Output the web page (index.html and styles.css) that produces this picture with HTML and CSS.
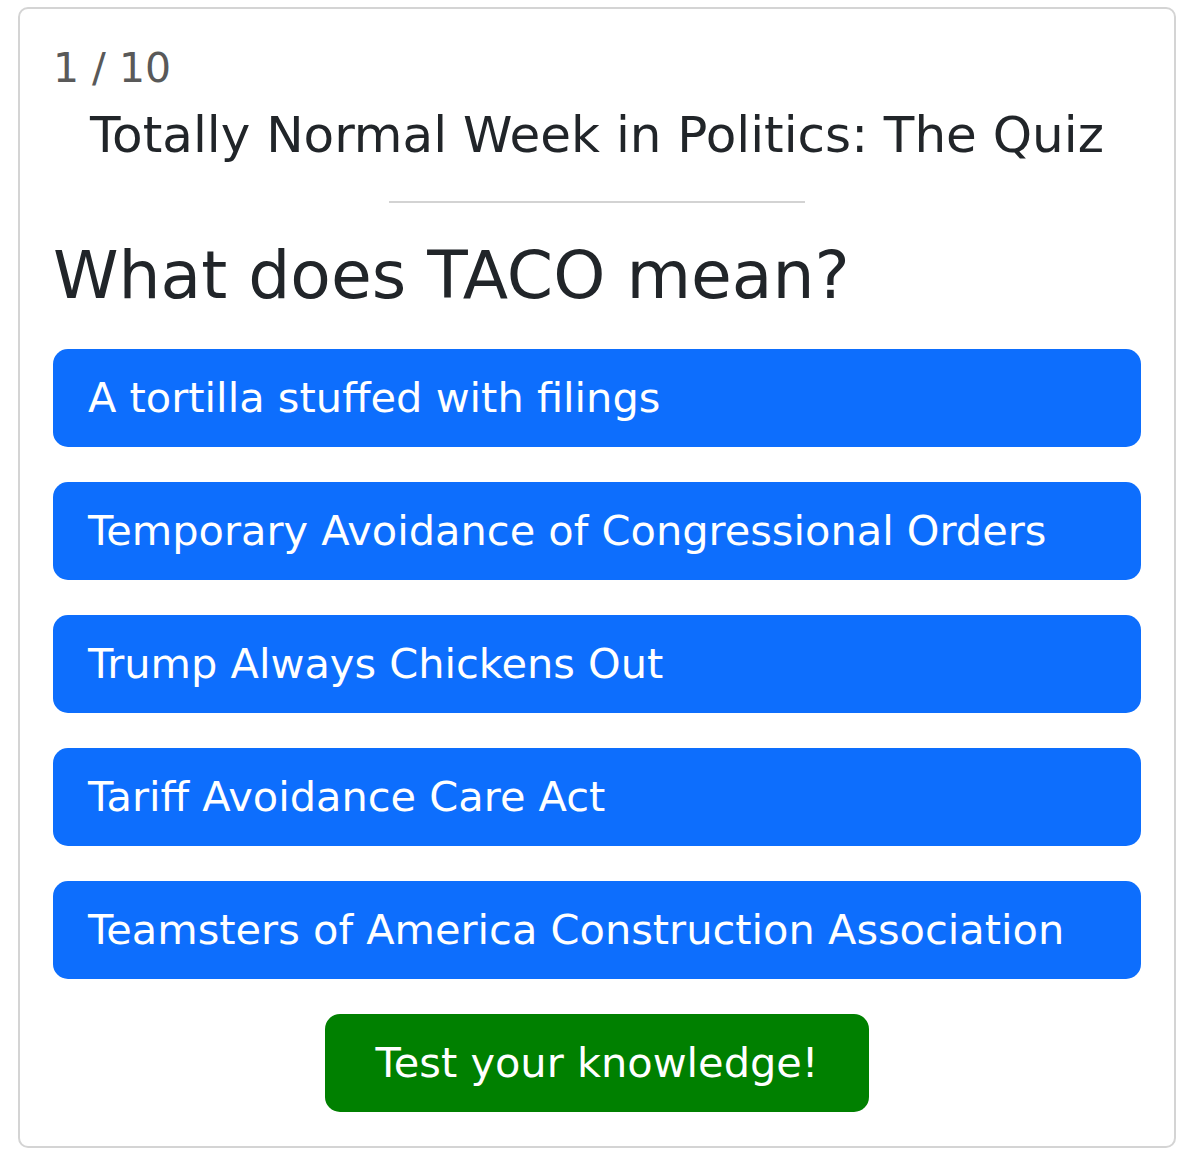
FILE: index.html
```html
<!DOCTYPE html>
<html lang="en">
<head>
  <meta charset="UTF-8">
  <meta name="viewport" content="width=device-width, initial-scale=1.0">
  <title>Totally Normal Week in Politics: The Quiz</title>
  <link rel="stylesheet" href="styles.css">
</head>
<body>
  <div class="quiz-card">
    <div class="progress">1 / 10</div>
    <h2 class="quiz-title">Totally Normal Week in Politics: The Quiz</h2>
    <hr class="divider">
    <h1 class="question">What does TACO mean?</h1>

    <div class="answers">
      <button class="answer-btn">A tortilla stuffed with filings</button>
      <button class="answer-btn">Temporary Avoidance of Congressional Orders</button>
      <button class="answer-btn">Trump Always Chickens Out</button>
      <button class="answer-btn">Tariff Avoidance Care Act</button>
      <button class="answer-btn">Teamsters of America Construction Association</button>
    </div>

    <div class="actions">
      <button class="submit-btn">Test your knowledge!</button>
    </div>
  </div>
</body>
</html>
```

FILE: styles.css
```css
* {
  margin: 0;
  padding: 0;
  box-sizing: border-box;
}

body {
  font-family: 'DejaVu Sans', sans-serif;
  background-color: #ffffff;
  color: #212529;
  padding: 7px 12px 0 18px;
}

.quiz-card {
  border: 2px solid #d4d4d4;
  border-radius: 10px;
  padding: 35px 33px 34px 33px;
}

.progress {
  font-size: 41px;
  line-height: 1.2;
  color: #595959;
}

.quiz-title {
  font-size: 50px;
  font-weight: normal;
  line-height: 1.2;
  text-align: center;
  margin-top: 12px;
}

.divider {
  width: 416px;
  height: 2px;
  border: none;
  background-color: #d3d3d3;
  margin: 36px auto 0;
}

.question {
  font-size: 66.3px;
  font-weight: normal;
  line-height: 1.2;
  margin-top: 33px;
}

.answers {
  display: flex;
  flex-direction: column;
  gap: 35px;
  margin-top: 33px;
}

.answer-btn,
.submit-btn {
  font-family: inherit;
  font-size: 41.5px;
  line-height: 58px;
  color: #ffffff;
  border: none;
  border-radius: 15px;
  cursor: pointer;
}

.answer-btn {
  background-color: #0d6efd;
  text-align: left;
  padding: 20px 35px;
}

.actions {
  display: flex;
  justify-content: center;
  margin-top: 35px;
}

.submit-btn {
  background-color: #008000;
  padding: 20px 50px;
}
```
